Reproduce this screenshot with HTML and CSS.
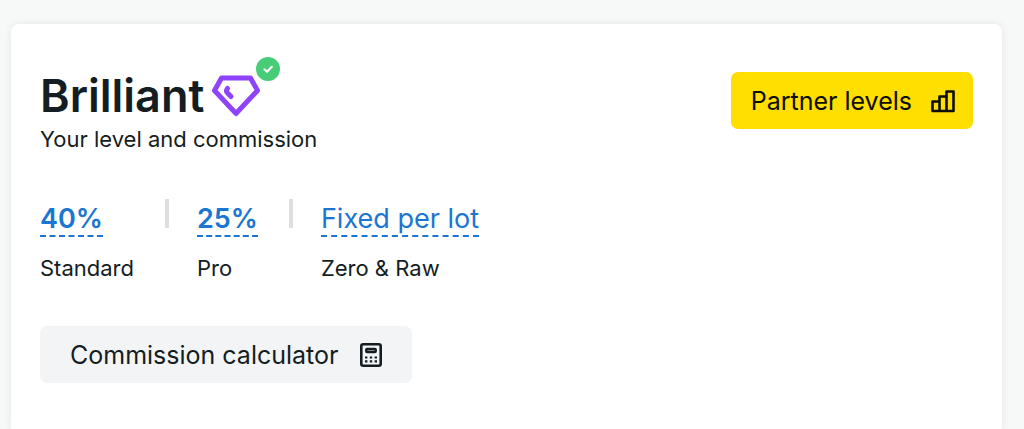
FILE: index.html
```html
<!DOCTYPE html>
<html lang="en">
<head>
    <meta charset="UTF-8">
    <meta name="viewport" content="width=device-width, initial-scale=1">
    <title>Partner level</title>
    <link rel="stylesheet" href="styles.css">
</head>
<body>
<main class="card">
    <header class="head">
        <div class="level">
            <div class="title">
                <h1>Brilliant</h1>
                <span class="badge">
                    <svg class="gem" viewBox="0 0 48 42" fill="none" stroke="#8f43fb" stroke-width="5" stroke-linejoin="round" stroke-linecap="round">
                        <path d="M9.500 3H38.500L45.500 15.500L24 38.500L2.500 15.500Z"/>
                        <path d="M15.500 13.500Q13.500 16 15.500 18L19 21.500"/>
                    </svg>
                    <svg class="check" viewBox="0 0 24 24" fill="none">
                        <circle cx="12" cy="12" r="12" fill="#47cd78"/>
                        <path d="M8.500 12.500L11 14.800L15.800 9.800" stroke="#fff" stroke-width="2.200" stroke-linecap="round" stroke-linejoin="round"/>
                    </svg>
                </span>
            </div>
            <p class="sub">Your level and commission</p>
        </div>
        <button type="button" class="btn btn-yellow">
            Partner levels
            <svg class="icon" viewBox="0 0 26 26" fill="none" stroke="currentColor" stroke-width="2.600" stroke-linejoin="round">
                <path d="M2.500 13.500H9.500V23H2.500ZM9.500 8.500H16.500V23H9.500ZM16.500 3.500H23.500V23H16.500Z"/>
            </svg>
        </button>
    </header>

    <dl class="rates">
        <div class="rate">
            <dd><a href="#" class="bold">40%</a></dd>
            <dt>Standard</dt>
        </div>
        <div class="rate">
            <dd><a href="#" class="bold">25%</a></dd>
            <dt>Pro</dt>
        </div>
        <div class="rate">
            <dd><a href="#">Fixed per lot</a></dd>
            <dt>Zero &amp; Raw</dt>
        </div>
    </dl>

    <button type="button" class="btn btn-gray">
        Commission calculator
        <svg class="icon" viewBox="0 0 26 26" fill="none" stroke="currentColor">
            <rect x="3.300" y="2.300" width="19.400" height="21.400" rx="2" stroke-width="2.600"/>
            <rect x="8.200" y="7" width="9.600" height="3" rx="1" stroke-width="2.400"/>
            <path d="M7 15.500H19M7 19.300H19" stroke-width="2.200" stroke-dasharray="2.400 2.400"/>
        </svg>
    </button>
</main>
</body>
</html>
```
FILE: styles.css
```css
/* reset */
body,h1,p,dl,dt,dd,button{margin:0;padding:0}
*{box-sizing:border-box}
a{text-decoration:none}
body {
    background: #f7f9f8;
    color: #141d22;
    font: 22px/28px Inter, "Liberation Sans", sans-serif;
}
.card {
    min-height: calc(100vh - 24px);
    margin: 24px 22px 0 11px;
    padding: 48px 29px;
    background: #fff;
    border-radius: 8px 8px 0 0;
    box-shadow: 0 0 8px rgba(20, 29, 34, 0.08);
}
.head {
    display: flex;
    justify-content: space-between;
    align-items: flex-start;
}
.title {
    display: flex;
    align-items: center;
    gap: 8px;
    height: 48px;
}
.title h1 {
    font-size: 45px;
    line-height: 48px;
    font-weight: 600;
}
.badge {
    position: relative;
    width: 48px;
    height: 42px;
}
.gem {
    display: block;
    width: 48px;
    height: 42px;
}
/* status mark over the gem's corner */
.check {
    position: absolute;
    top: -18px;
    right: -20px;
    width: 24px;
    height: 24px;
}
.sub {
    line-height: 38px;
}
.btn {
    display: flex;
    align-items: center;
    height: 57px;
    border: 0;
    border-radius: 7px;
    color: inherit;
    font-family: inherit;
    font-size: 25px;
    line-height: 32px;
    cursor: pointer;
}
.btn .icon {
    width: 26px;
    height: 26px;
}
.btn-yellow {
    gap: 18px;
    padding: 0 17px 0 20px;
    background: #ffde02;
    color: #0d0d00;
}
.btn-gray {
    gap: 20px;
    padding: 0 28px 0 30px;
    background: #f3f4f6;
}

/* commission rates */
.rates {
    display: flex;
    gap: 31px;
    margin: 41px 0 44px;
}
.rate {
    display: flex;
    flex-direction: column;
    gap: 17px;
}
.rate + .rate {
    padding-left: 32px;
    background: linear-gradient(#dedede, #dedede) no-repeat 0 0 / 4px 29px;
}
.rate a {
    display: inline-block;
    padding-top: 4px;
    border-bottom: 2px dashed #1a76d2;
    color: #1a76d2;
    font-size: 27px;
    line-height: 32px;
}
.rate dd {
    height: 38px;
}
.rate .bold {
    font-weight: 600;
}
```
